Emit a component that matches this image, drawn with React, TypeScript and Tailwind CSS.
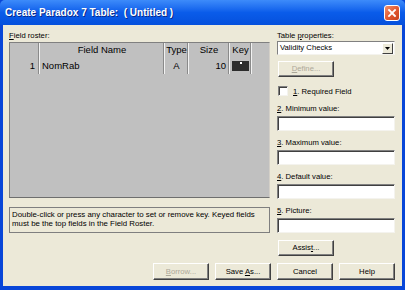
import React from "react";

function Btn({
  children,
  className = "",
  disabled = false,
}: {
  children: React.ReactNode;
  className?: string;
  disabled?: boolean;
}) {
  return (
    <div
      className={
        "h-[17px] flex items-center justify-center bg-[#ECE9D8] text-[7.7px] border border-t-white border-l-white border-r-[#404040] border-b-[#404040] shadow-[inset_-1px_-1px_#808080] " +
        (disabled ? "text-[#ACA899] " : "text-black ") +
        className
      }
    >
      <span>{children}</span>
    </div>
  );
}

function Field({ num, label }: { num: string; label: string }) {
  return (
    <div className="flex flex-col">
      <div className="h-[12px] flex items-center text-[7.7px] leading-none">
        <span>
          <span className="underline">{num}</span>
          {label}
        </span>
      </div>
      <div className="mt-[1px] h-[15px] bg-white border border-t-[#808080] border-l-[#808080] border-r-[#F4F3EE] border-b-[#F4F3EE] shadow-[inset_1px_1px_#404040]" />
    </div>
  );
}

export default function App() {
  return (
    <div className="w-[405px] h-[290px] flex flex-col bg-[#0846D8] font-['Liberation_Sans',Arial,sans-serif] text-black overflow-hidden">
      {/* Title bar */}
      <div className="h-[25px] flex items-center pl-[5px] pr-[5px] rounded-t-[5px] bg-gradient-to-b from-[#3D8BFA] via-[#0A5CEA] to-[#0550DC]">
        <span className="text-white font-bold text-[10px] whitespace-pre flex-1 [text-shadow:1px_1px_#0A2A8A]">
          {"Create Paradox 7 Table:  ( Untitled )"}
        </span>
        <div className="w-[16px] h-[16px] rounded-[3px] border border-white bg-gradient-to-br from-[#F0906A] via-[#E25A32] to-[#C8401C] flex items-center justify-center">
          <svg width="10" height="10" viewBox="0 0 10 10">
            <path d="M2 2 L8 8 M8 2 L2 8" stroke="white" strokeWidth="1.8" strokeLinecap="square" />
          </svg>
        </div>
      </div>

      {/* Body */}
      <div className="flex-1 mx-[3px] mb-[4px] bg-[#ECE9D8] flex flex-col pt-[5px] pl-[6px] pr-[7px]">
        <div className="flex gap-[7px] h-[226px]">
          {/* Left column */}
          <div className="w-[261px] flex flex-col">
            <div className="h-[12px] flex items-center text-[7.7px] leading-none">
              <span>
                <span className="underline">F</span>ield roster:
              </span>
            </div>
            <div className="h-[156px] bg-[#C0C0C0] border-t border-l border-t-[#808080] border-l-[#808080] border-b border-b-[#6E6E6E] border-r border-r-[#D4D0C8] text-[9.5px]">
              <div className="flex h-[15px]">
                <div className="w-[30px] border-r border-r-[#F2F2F2] shadow-[inset_-1px_0_#8A8A8A]" />
                <div className="w-[125px] flex items-center justify-center border-r border-r-[#F2F2F2] shadow-[inset_-1px_0_#8A8A8A]">
                  Field Name
                </div>
                <div className="w-[24px] flex items-center justify-center border-r border-r-[#F2F2F2] shadow-[inset_-1px_0_#8A8A8A]">
                  Type
                </div>
                <div className="w-[41px] flex items-center justify-center border-r border-r-[#F2F2F2] shadow-[inset_-1px_0_#8A8A8A]">
                  Size
                </div>
                <div className="w-[22px] flex items-center justify-center border-r border-r-[#F2F2F2] shadow-[inset_-1px_0_#8A8A8A]">
                  Key
                </div>
              </div>
              <div className="flex h-[16px]">
                <div className="w-[30px] flex items-center justify-end pr-[4px] border-r border-r-[#F2F2F2] shadow-[inset_-1px_0_#8A8A8A]">
                  1
                </div>
                <div className="w-[125px] flex items-center pl-[2px] border-r border-r-[#F2F2F2] shadow-[inset_-1px_0_#8A8A8A]">
                  NomRab
                </div>
                <div className="w-[24px] flex items-center justify-center border-r border-r-[#F2F2F2] shadow-[inset_-1px_0_#8A8A8A]">
                  A
                </div>
                <div className="w-[41px] flex items-center justify-end pr-[3px] border-r border-r-[#F2F2F2] shadow-[inset_-1px_0_#8A8A8A]">
                  10
                </div>
                <div className="w-[22px] flex items-center justify-center border-r border-r-[#F2F2F2] shadow-[inset_-1px_0_#8A8A8A]">
                  <div className="w-[17px] h-[10px] bg-[#2C2C2C] flex justify-center">
                    <div className="w-[2px] h-[2px] mt-[1px] bg-white" />
                  </div>
                </div>
              </div>
            </div>
            <div className="mt-[9px] h-[26px] border border-[#7F7F7F] bg-[#ECE9D8] px-[2px] pt-[3px] text-[7.85px] leading-[8.5px]">
              <div>Double-click or press any character to set or remove key. Keyed fields</div>
              <div>must be the top fields in the Field Roster.</div>
            </div>
          </div>

          {/* Right column */}
          <div className="w-[118px] flex flex-col">
            <div className="h-[12px] flex items-center text-[7.7px] leading-none">
              <span>
                Table <span className="underline">p</span>roperties:
              </span>
            </div>
            <div className="h-[14px] bg-white border border-t-[#808080] border-l-[#808080] border-r-[#F4F3EE] border-b-[#F4F3EE] flex items-center">
              <span className="flex-1 pl-[2px] text-[7.7px]">Validity Checks</span>
              <div className="w-[11px] h-[11px] mr-[1px] bg-[#ECE9D8] border border-t-white border-l-white border-r-[#404040] border-b-[#404040] flex items-center justify-center">
                <svg width="5" height="3" viewBox="0 0 5 3">
                  <path d="M0 0 H5 L2.5 3 Z" fill="black" />
                </svg>
              </div>
            </div>
            <Btn disabled className="mt-[6px] w-[56px] ml-[1px]">
              <span className="underline">D</span>efine...
            </Btn>
            <div className="mt-[8px] h-[14px] flex items-center text-[7.7px]">
              <div className="w-[10px] h-[10px] ml-[1px] bg-white border border-t-[#808080] border-l-[#808080] border-r-[#F4F3EE] border-b-[#F4F3EE] shadow-[inset_1px_1px_#404040]" />
              <span className="ml-[5px]">
                <span className="underline">1</span>. Required Field
              </span>
            </div>
            <div className="mt-[5px] flex flex-col gap-[6px]">
              <Field num="2" label=". Minimum value:" />
              <Field num="3" label=". Maximum value:" />
              <Field num="4" label=". Default value:" />
              <Field num="5" label=". Picture:" />
            </div>
            <Btn className="mt-[7px] w-[56px] ml-[1px]">
              Assis<span className="underline">t</span>...
            </Btn>
          </div>
        </div>

        {/* Bottom buttons */}
        <div className="mt-[7px] flex justify-end gap-[6px]">
          <Btn disabled className="w-[56px]">
            <span className="underline">B</span>orrow...
          </Btn>
          <Btn className="w-[56px]">
            Save <span className="underline">A</span>s...
          </Btn>
          <Btn className="w-[56px]">Cancel</Btn>
          <Btn className="w-[56px]">Help</Btn>
        </div>
      </div>
    </div>
  );
}
